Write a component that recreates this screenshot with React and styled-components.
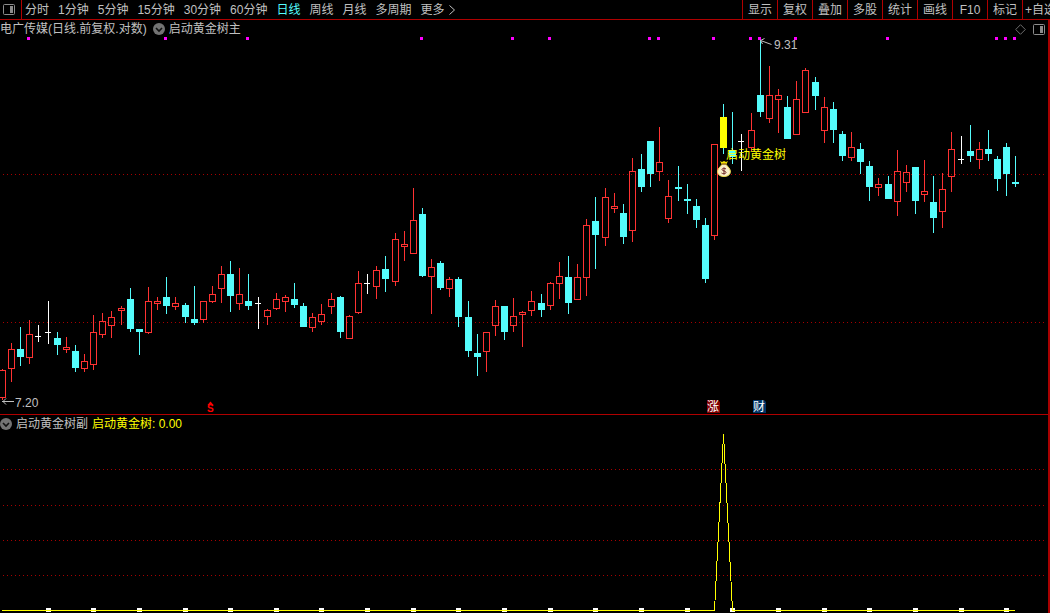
import React from "react";
import styled, { createGlobalStyle } from "styled-components";

const periods = [
  "分时",
  "1分钟",
  "5分钟",
  "15分钟",
  "30分钟",
  "60分钟",
  "日线",
  "周线",
  "月线",
  "多周期",
];

const tools = ["显示", "复权", "叠加", "多股", "统计", "画线", "F10", "标记"];

// kind, high, body top, body bottom, low
// r = up, c = down, w = flat, y = signal day
const candles = [
  ["r", 369, 370, 398, 400],
  ["r", 343, 349, 369, 382],
  ["c", 327, 349, 357, 366],
  ["r", 320, 334, 358, 364],
  ["w", 325, 336, 337, 342],
  ["w", 301, 332, 333, 344],
  ["c", 332, 338, 345, 355],
  ["r", 337, 347, 350, 353],
  ["c", 345, 351, 368, 372],
  ["r", 354, 361, 369, 372],
  ["r", 315, 332, 365, 370],
  ["r", 313, 321, 335, 338],
  ["r", 311, 317, 326, 338],
  ["r", 306, 308, 311, 325],
  ["c", 288, 299, 329, 332],
  ["c", 329, 329, 332, 355],
  ["r", 287, 301, 333, 334],
  ["r", 297, 301, 304, 310],
  ["c", 277, 297, 306, 314],
  ["r", 297, 303, 307, 310],
  ["c", 303, 305, 317, 323],
  ["c", 286, 319, 323, 325],
  ["r", 301, 301, 320, 323],
  ["r", 286, 294, 302, 303],
  ["r", 266, 274, 289, 303],
  ["c", 261, 274, 296, 312],
  ["r", 268, 294, 304, 310],
  ["c", 274, 301, 306, 310],
  ["w", 297, 303, 304, 329],
  ["r", 309, 310, 317, 325],
  ["r", 293, 299, 309, 310],
  ["r", 295, 297, 302, 312],
  ["c", 283, 299, 305, 308],
  ["c", 303, 306, 327, 327],
  ["r", 313, 317, 328, 332],
  ["r", 304, 314, 322, 325],
  ["r", 293, 299, 307, 314],
  ["c", 296, 297, 332, 338],
  ["r", 315, 316, 339, 339],
  ["r", 271, 283, 313, 314],
  ["w", 274, 283, 284, 294],
  ["r", 266, 270, 287, 299],
  ["c", 256, 269, 279, 292],
  ["r", 233, 239, 282, 286],
  ["r", 231, 244, 247, 261],
  ["r", 188, 220, 254, 254],
  ["c", 208, 214, 276, 277],
  ["r", 259, 267, 277, 314],
  ["c", 261, 263, 288, 290],
  ["r", 277, 279, 289, 297],
  ["c", 277, 279, 317, 327],
  ["c", 301, 317, 351, 357],
  ["c", 334, 353, 357, 376],
  ["r", 332, 332, 352, 372],
  ["r", 300, 306, 326, 336],
  ["c", 306, 306, 332, 340],
  ["r", 298, 316, 326, 332],
  ["r", 311, 312, 315, 347],
  ["r", 291, 301, 311, 316],
  ["c", 294, 303, 310, 317],
  ["r", 282, 283, 306, 310],
  ["r", 262, 276, 284, 299],
  ["c", 256, 277, 303, 314],
  ["r", 264, 277, 300, 300],
  ["r", 219, 225, 278, 296],
  ["c", 197, 221, 235, 269],
  ["r", 188, 197, 238, 246],
  ["r", 193, 206, 209, 213],
  ["c", 204, 213, 237, 244],
  ["r", 158, 171, 231, 242],
  ["c", 154, 169, 187, 192],
  ["c", 141, 141, 174, 187],
  ["r", 127, 162, 172, 181],
  ["r", 180, 196, 219, 223],
  ["c", 166, 187, 189, 201],
  ["c", 184, 199, 201, 214],
  ["c", 199, 206, 220, 228],
  ["c", 218, 225, 279, 283],
  ["r", 144, 144, 236, 240],
  ["y", 104, 117, 148, 154],
  ["c", 112, 150, 157, 164],
  ["w", 134, 141, 142, 171],
  ["r", 113, 130, 148, 151],
  ["c", 40, 95, 112, 117],
  ["r", 66, 95, 119, 123],
  ["r", 89, 95, 100, 133],
  ["c", 96, 107, 139, 139],
  ["r", 81, 99, 135, 135],
  ["r", 68, 70, 113, 113],
  ["c", 77, 82, 96, 110],
  ["r", 97, 107, 131, 143],
  ["c", 102, 109, 130, 143],
  ["c", 131, 134, 156, 161],
  ["r", 132, 147, 158, 161],
  ["c", 143, 149, 162, 174],
  ["c", 161, 166, 187, 201],
  ["r", 178, 184, 188, 196],
  ["c", 176, 184, 199, 199],
  ["r", 150, 171, 202, 216],
  ["r", 165, 172, 183, 192],
  ["c", 167, 167, 201, 214],
  ["r", 160, 191, 195, 202],
  ["c", 176, 202, 218, 233],
  ["r", 173, 189, 212, 228],
  ["r", 132, 149, 177, 192],
  ["w", 136, 159, 160, 164],
  ["c", 125, 151, 156, 162],
  ["r", 142, 149, 160, 169],
  ["c", 130, 149, 154, 161],
  ["c", 156, 159, 179, 191],
  ["c", 143, 147, 174, 196],
  ["c", 156, 182, 184, 187],
];

const eventDays = [3, 18, 27, 46, 56, 60, 71, 72, 78, 82, 83, 87, 97, 109, 110, 111];
const colors = { r: "#ff3232", c: "#54fcfc", w: "#ffffff", y: "#ffff00" };
const candleX = (i) => Math.round(1.93 + i * 9.13);

const Candle = ({ index, data }) => {
  const [kind, high, top, bottom, low] = data;
  const x = candleX(index);
  const color = colors[kind];
  if (kind === "r") {
    return (
      <g fill={color}>
        <rect x={x} y={high} width="1" height={top - high} />
        <rect x={x} y={bottom} width="1" height={low - bottom} />
        <rect
          x={x - 2.5}
          y={top + 0.5}
          width="6"
          height={bottom - top - 1}
          fill="none"
          stroke={color}
        />
      </g>
    );
  }
  return (
    <g fill={color}>
      <rect
        x={x}
        y={high}
        width="1"
        height={low - high}
        fill={kind === "y" ? colors.c : color}
      />
      <rect
        x={x - 3}
        y={top}
        width={kind === "w" ? 6 : 7}
        height={bottom - top}
      />
    </g>
  );
};

const GridLine = ({ y }) => (
  <line x1="3" x2="1046" y1={y + 0.5} y2={y + 0.5} stroke="#a80000" strokeDasharray="1 3" />
);

const PanelIcon = () => (
  <svg width="12" height="11" viewBox="0 0 12 11" fill="none">
    <rect x="0.5" y="0.5" width="11" height="10" rx="1" stroke="#8c8c8c" />
    <rect x="7" y="2" width="3" height="7" fill="#8c8c8c" />
  </svg>
);

const DropIcon = () => (
  <svg width="12" height="12" viewBox="0 0 12 12">
    <circle cx="6" cy="6" r="6" fill="#737373" />
    <path d="M3 5l3 3 3-3" fill="none" stroke="#101010" strokeWidth="1.6" />
  </svg>
);

const MoneyBag = () => (
  <g>
    <path d="M720 161l2 1 2-1 2 1 2-1-2 4h-4z" fill="#f4e400" />
    <path d="M722 164.500h4l3 3.500c3 4 1 8.500-5 8.500s-8-4.500-5-8.500z" fill="#fbeec8" stroke="#f0dc50" />
    <path d="M722 164h4" stroke="#7a3a20" />
    <path
      d="M726 169c-1-1-4-1-4 .6s4 1 4 2.800-3.500 1.600-4.500.6M724 167.500v7"
      fill="none"
      stroke="#702828"
    />
  </g>
);

const MainChart = () => (
  <Chart viewBox="0 37 1048 377" role="img" aria-label="日线">
    <g shapeRendering="crispEdges">
      <GridLine y={174} />
      <GridLine y={322} />
      {candles.map((item, i) => (
        <Candle key={i} index={i} data={item} />
      ))}
      {eventDays.map((day) => (
        <rect key={day} x={candleX(day) - 2} y="37" width="3" height="3" fill="#ff00ff" />
      ))}
    </g>
    <g fill="none" stroke="#c0c0c0">
      <path d="M760.500 40.500l11 4M764.500 38.500l-4 2 2 3.500" />
      <path d="M2 401.500h12M6 398.500l-3 3 3 3" />
    </g>
    <Note x="774" y="49">9.31</Note>
    <Note x="15" y="407">7.20</Note>
    <Note x="726" y="159" $color="#ffff00">启动黄金树</Note>
    <MoneyBag />
    <path d="M207.500 405l3-3.500 3 3.500z" fill="#ff0000" />
    <Note x="207" y="412" $color="#ff0000" $size={10} $bold>S</Note>
    <path d="M707 400h11l2 2v11h-13z" fill="#800000" />
    <Note x="707" y="411" $color="#ffffff">涨</Note>
    <path d="M753 400h11l2 2v11h-13z" fill="#003468" />
    <Note x="753" y="411" $color="#ffffff">财</Note>
  </Chart>
);

const SubChart = () => (
  <Chart viewBox="0 432 1048 181" role="img" aria-label="启动黄金树副">
    <g shapeRendering="crispEdges">
      {[469, 505, 540, 575].map((y) => (
        <GridLine key={y} y={y} />
      ))}
      {candles.map((_, i) =>
        i > 0 && i % 5 === 0 ? (
          <rect key={i} x={candleX(i) - 2} y="608" width="5" height="4" fill="#ffffff" />
        ) : null
      )}
      <path
        d="M2 610.500H714.500L723.500 434L732.500 610.500H1015"
        fill="none"
        stroke="#ffff00"
      />
    </g>
  </Chart>
);

const App = () => {
  return (
    <>
      <GlobalStyle />
      <Page>
        <Toolbar>
          <LayoutButton aria-label="布局">
            <PanelIcon />
          </LayoutButton>
          <Periods>
            {periods.map((name) => (
              <PeriodButton key={name} $active={name === "日线"}>
                {name}
              </PeriodButton>
            ))}
            <PeriodButton>
              更多
              <svg width="6" height="10" viewBox="0 0 6 10">
                <path d="M.5.5l5 4.500-5 4.500" fill="none" stroke="#c0c0c0" />
              </svg>
            </PeriodButton>
          </Periods>
          <Tools>
            {tools.map((name) => (
              <ToolButton key={name}>{name}</ToolButton>
            ))}
            <AddButton>+自选</AddButton>
          </Tools>
        </Toolbar>
        <Body>
          <Panel>
            <PanelHead>
              <span>电广传媒(日线.前复权.对数)</span>
              <HeadButton aria-label="指标">
                <DropIcon />
              </HeadButton>
              <span>启动黄金树主</span>
              <HeadIcons>
                <svg width="11" height="11" viewBox="0 0 11 11">
                  <path d="M5.500.7l4.800 4.800-4.800 4.800L.7 5.500z" fill="none" stroke="#6c6c6c" />
                </svg>
                <PanelIcon />
              </HeadIcons>
            </PanelHead>
            <MainChart />
          </Panel>
          <SubPanel>
            <SubHead>
              <DropIcon />
              <span>启动黄金树副</span>
              <Value>启动黄金树: 0.00</Value>
            </SubHead>
            <SubChart />
          </SubPanel>
        </Body>
      </Page>
    </>
  );
};

export default App;

const GlobalStyle = createGlobalStyle`
  * {
    box-sizing: border-box;
  }
  body {
    margin: 0;
    background: #000;
    color: #c0c0c0;
    font-family: "Liberation Sans", "Noto Sans CJK SC", sans-serif;
    font-size: 12px;
    line-height: 16px;
    overflow: hidden;
  }
  button {
    padding: 0;
    border: none;
    background: none;
    color: inherit;
    font: inherit;
    white-space: nowrap;
    cursor: pointer;
  }
  svg {
    display: block;
    flex-shrink: 0;
  }
`;

const Page = styled.div`
  width: 100%;
  min-height: 100vh;
  background: #000;
`;

const Toolbar = styled.div`
  display: flex;
  height: 20px;
  border-bottom: 1px solid #b00000;
`;

const LayoutButton = styled.button`
  display: flex;
  align-items: center;
  width: 22px;
  padding-left: 3px;
  border-right: 1px solid #b00000;
`;

const Periods = styled.div`
  display: flex;
  align-items: center;
  gap: 9px;
  margin-left: 3px;
`;

const PeriodButton = styled.button`
  display: flex;
  align-items: center;
  gap: 4px;
  color: ${(props) => (props.$active ? "#54fcfc" : "#c0c0c0")};
`;

const Tools = styled.div`
  display: flex;
  margin-left: auto;
`;

const ToolButton = styled.button`
  width: 35px;
  border-left: 1px solid #b00000;
`;

const AddButton = styled.button`
  width: 28px;
  padding-left: 2px;
  border-left: 1px solid #b00000;
  text-align: left;
  overflow: hidden;
`;

const Body = styled.div`
  border-right: 2px solid #a80000;
`;

const Panel = styled.section`
  width: 100%;
`;

const SubPanel = styled.section`
  border-top: 1px solid #b00000;
`;

const PanelHead = styled.div`
  display: flex;
  align-items: center;
  height: 17px;
  padding-top: 1px;
  padding-right: 3px;
`;

const HeadButton = styled.button`
  margin: 0 4px 0 6px;
`;

const HeadIcons = styled.div`
  display: flex;
  align-items: center;
  gap: 7px;
  margin-left: auto;
`;

const SubHead = styled.div`
  display: flex;
  align-items: center;
  gap: 4px;
  height: 17px;
`;

const Value = styled.span`
  color: #ffff00;
`;

const Chart = styled.svg`
  width: 100%;
  height: auto;
`;

const Note = styled.text`
  fill: ${(props) => props.$color || "#c0c0c0"};
  font-size: ${(props) => props.$size || 12}px;
  font-weight: ${(props) => (props.$bold ? 700 : 400)};
`;
